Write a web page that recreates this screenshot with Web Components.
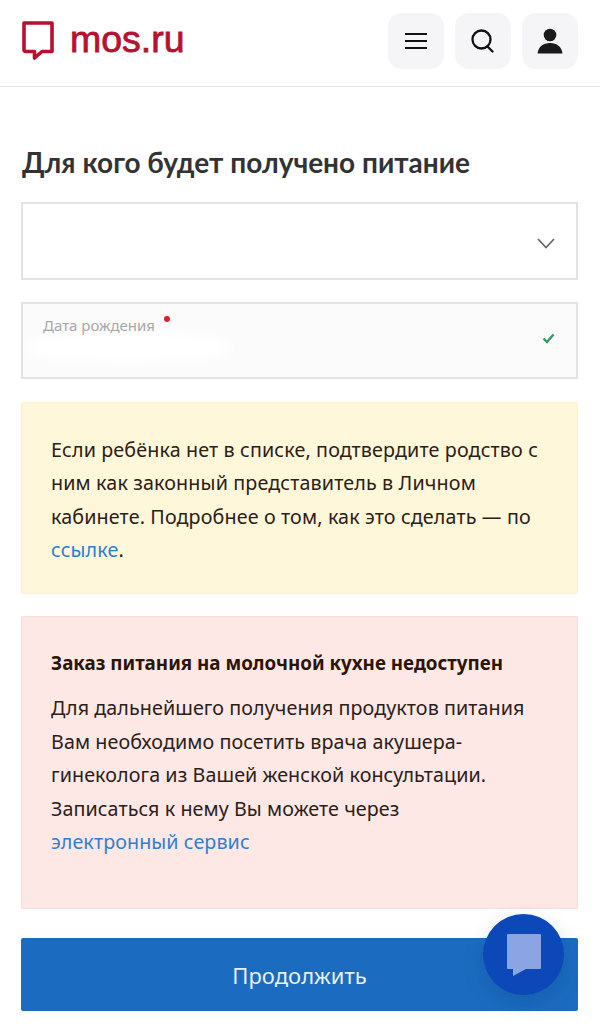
<!DOCTYPE html>
<html lang="ru"><head><meta charset="utf-8">
<style>
html,body{margin:0;padding:0;background:#fff;height:1035px;overflow:hidden}
body{font-family:"Noto Sans","Open Sans",sans-serif;color:#2b2016}
</style></head><body>
<mos-header></mos-header>
<mos-page>
  <h-title>Для кого будет получено питание</h-title>
  <mos-select></mos-select>
  <mos-date label="Дата рождения"></mos-date>
  <mos-notice tone="warn">Если ребёнка нет в списке, подтвердите родство с<br>ним как законный представитель в Личном<br>кабинете. Подробнее о том, как это сделать — по<br><a href="#">ссылке</a>.</mos-notice>
  <mos-notice tone="err"><b>Заказ питания на молочной кухне недоступен</b>Для дальнейшего получения продуктов питания<br>Вам необходимо посетить врача акушера-<br>гинеколога из Вашей женской консультации.<br>Записаться к нему Вы можете через<br><a href="#">электронный сервис</a></mos-notice>
  <mos-button>Продолжить</mos-button>
</mos-page>
<mos-fab></mos-fab>
<script>
function def(name,html){
  customElements.define(name,class extends HTMLElement{
    connectedCallback(){
      if(this.shadowRoot)return;
      const r=this.attachShadow({mode:'open'});
      r.innerHTML=typeof html==='function'?html(this):html;
    }
  });
}
def('mos-header',`<style>
:host{display:flex;align-items:center;justify-content:space-between;height:86px;border-bottom:1px solid #e6e6e8;padding:0 22px}
.logo{display:flex;align-items:center;gap:16px;color:#b8102f;font:400 37.500px/1 "Liberation Sans",Arial,sans-serif;-webkit-text-stroke:.8px #b8102f;padding-bottom:5px}
.logo span{position:relative;top:-1px}
.btns{display:flex;gap:11px;padding-bottom:5px}
button{width:56px;height:56px;border:0;border-radius:14px;background:#f5f5f7;padding:0;display:flex;align-items:center;justify-content:center}
</style>
<div class="logo"><svg width="32" height="40" viewBox="0 0 32 40"><path d="M2 2H30V30.500H20L12.500 37V30.500H4Q2 30.500 2 28.500Z" fill="none" stroke="#b8102f" stroke-width="3.600" stroke-linejoin="round"/></svg><span>mos.ru</span></div>
<div class="btns">
<button aria-label="Меню"><svg width="24" height="18" viewBox="0 0 24 18"><path d="M1 2H23M1 9H23M1 16H23" stroke="#111" stroke-width="2.200"/></svg></button>
<button aria-label="Поиск"><svg width="24" height="24" viewBox="0 0 24 24" fill="none" stroke="#111" stroke-width="2.300"><circle cx="10.500" cy="10.500" r="9"/><path d="M16.500 17.500L21.500 22.500" stroke-linecap="round"/></svg></button>
<button aria-label="Профиль"><svg width="26" height="26" viewBox="0 0 26 26" fill="#1a1a1a"><circle cx="13" cy="7" r="6.300"/><path d="M0.500 25.500C1.500 18.500 6 15 13 15S24.500 18.500 25.500 25.500Z"/></svg></button>
</div>`);
def('mos-page',`<style>:host{display:flex;flex-direction:column;padding:0 22px 0 21px;box-sizing:border-box;width:600px}</style><slot></slot>`);
def('h-title',`<style>:host{display:block;font:700 28px/36px Lato,"Open Sans",sans-serif;color:#333;padding:57px 0 22px 1px}</style><slot></slot>`);
def('mos-select',`<style>:host{display:flex;align-items:center;justify-content:flex-end;height:78px;box-sizing:border-box;border:2px solid #e2e2e2;padding:4px 21px 0 0;background:#fff}</style>
<svg width="18" height="11" viewBox="0 0 18 11" fill="none"><path d="M1 1L9 9.500L17 1" stroke="#666" stroke-width="1.700"/></svg>`);
def('mos-date',el=>`<style>:host{display:block;position:relative;overflow:hidden;height:77px;box-sizing:border-box;border:2px solid #e2e2e2;background:#fbfbfb;margin-top:22px;padding:11px 20px}
.l{font-size:15px;line-height:20px;color:#a8a8a8;position:relative}
.d{position:absolute;left:121px;top:1px;width:6px;height:6px;border-radius:50%;background:#d8232f}
.c{position:absolute;right:21px;top:29px}
.s{position:absolute;left:0;top:28px;width:210px;height:30px;border-radius:50%;background:#fff;filter:blur(6px)}
</style><i class="s"></i><div class="l">${el.getAttribute('label')}<i class="d"></i></div>
<svg class="c" width="13" height="11" viewBox="0 0 13 11" fill="none"><path d="M1.500 5.500L5 9L11.500 1.500" stroke="#2f9e5f" stroke-width="2.400"/></svg>`);
def('mos-notice',el=>{const e=el.getAttribute('tone')==='err';return `<style>
:host{display:block;box-sizing:border-box;border:1px solid ${e?'#fbdcdc':'#fbf0cf'};background:${e?'#fee8e6':'#fff7da'};border-radius:2px;
margin-top:${e?22:23}px;height:${e?293:192}px;padding:${e?'29':'29.500'}px 29px 0;font-size:19.700px;line-height:33.500px;color:#2b2016;letter-spacing:${e?'.08':'.14'}px}
::slotted(b){display:block;font-weight:700;font-size:18.800px;line-height:34px;margin-bottom:11px;color:#2b1505;letter-spacing:0}
::slotted(a){color:#2f7fd0;text-decoration:none}
</style><slot></slot>`});
def('mos-button',`<style>:host{display:flex;align-items:center;justify-content:center;height:73px;margin-top:29px;background:#1b6cc0;color:#e8f0fa;border-radius:2px;font-size:22px}</style><slot></slot>`);
def('mos-fab',`<style>:host{position:fixed;left:483px;top:914px;width:81px;height:81px;border-radius:50%;background:#0d48b8;display:flex;align-items:center;justify-content:center;box-shadow:0 8px 20px rgba(10,50,120,.22)}</style>
<svg width="34" height="42" viewBox="0 0 34 42"><path d="M1 0H33Q34 0 34 1V34Q34 35 33 35H19L6 42V35H1Q0 35 0 34V1Q0 0 1 0Z" fill="#8aa4e4"/></svg>`);
</script>
</body></html>
